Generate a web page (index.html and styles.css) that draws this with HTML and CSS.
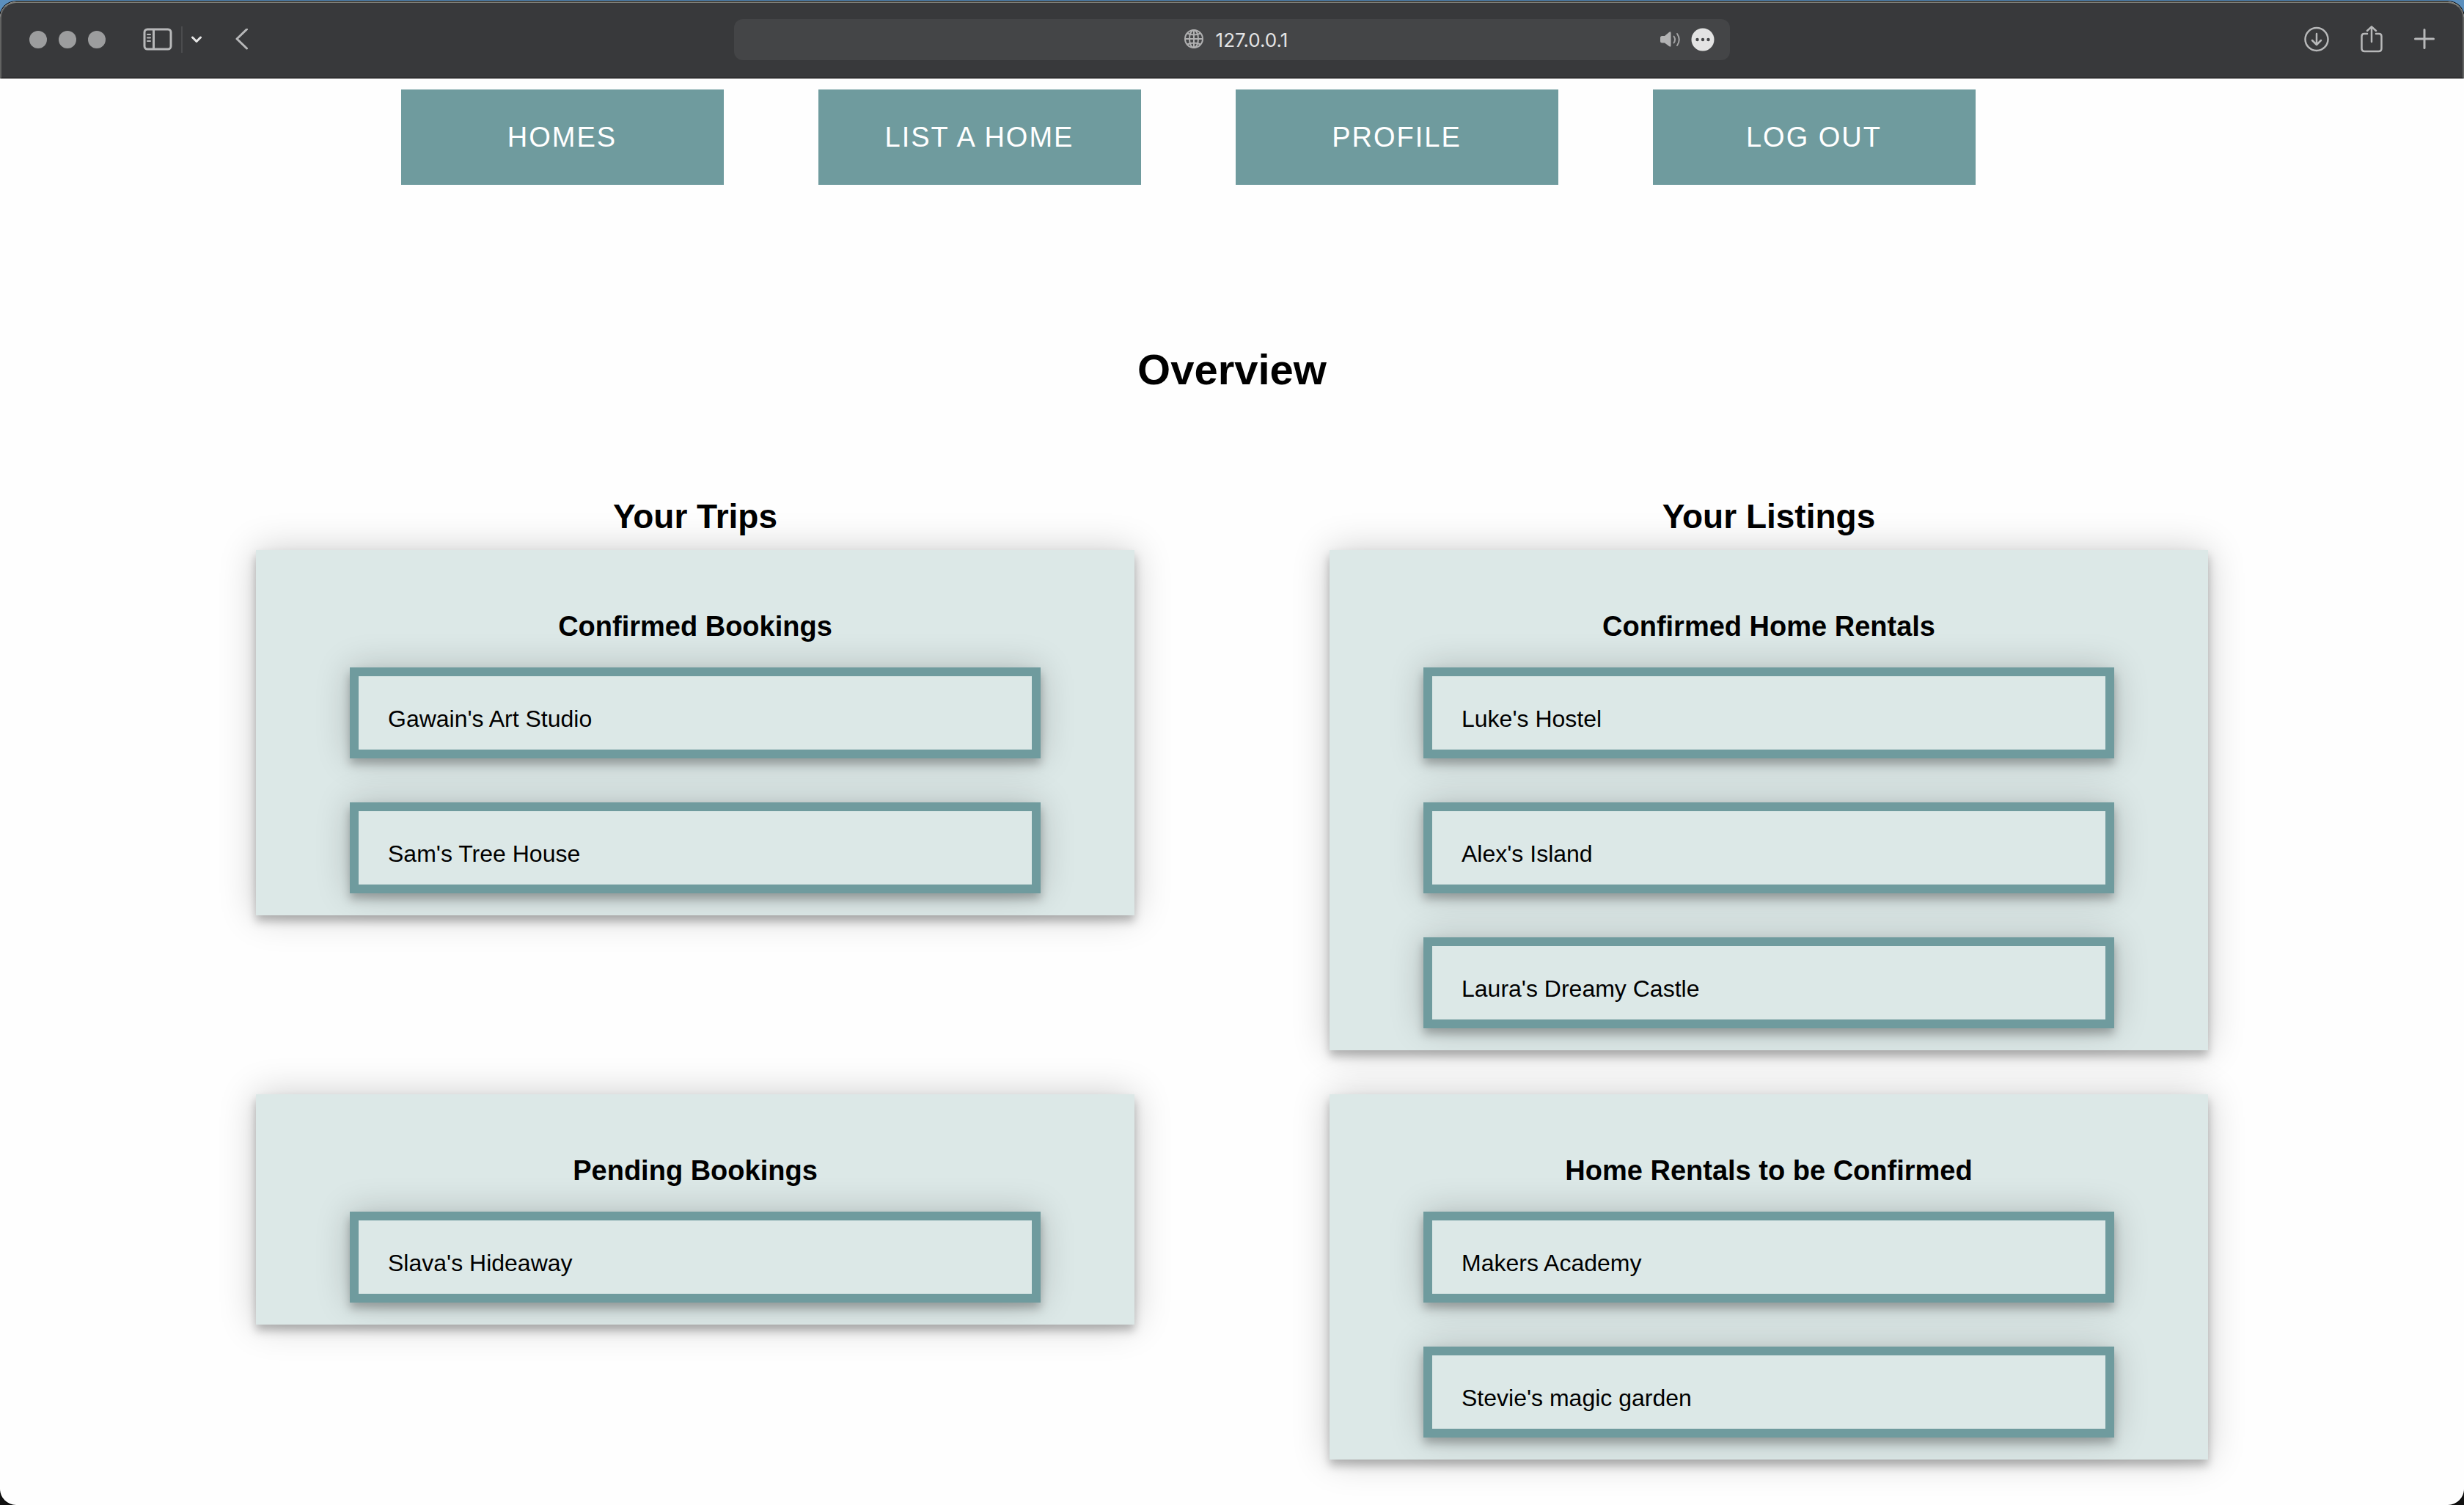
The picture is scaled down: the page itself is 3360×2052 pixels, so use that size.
FILE: index.html
```html
<!DOCTYPE html>
<html lang="en">
<head>
<meta charset="utf-8">
<title>Overview</title>
<link rel="stylesheet" href="styles.css">
</head>
<body>
<div class="window">
  <header class="toolbar">
    <div class="tools-left">
      <div class="lights"><span class="light"></span><span class="light"></span><span class="light"></span></div>
      <div class="sidebar-tools">
        <button class="tool" aria-label="Show sidebar"><svg width="40" height="32" viewBox="0 0 40 32" fill="none" stroke="#b7b8b9" stroke-width="3"><rect x="2" y="2" width="36" height="27" rx="4"/><path d="M14.500 2v27"/><path d="M6 9h4M6 13.500h4M6 18h4" stroke-width="2" stroke-linecap="round"/></svg></button>
        <span class="divider"></span>
        <button class="tool" aria-label="Tab groups"><svg width="14" height="10" viewBox="0 0 14 10" fill="none" stroke="#e6e6e6" stroke-width="3" stroke-linecap="round" stroke-linejoin="round"><path d="M1.500 2L7 7.500L12.500 2"/></svg></button>
      </div>
      <button class="tool back" aria-label="Back"><svg width="18" height="30" viewBox="0 0 18 30" fill="none" stroke="#b7b8b9" stroke-width="3" stroke-linecap="round" stroke-linejoin="round"><path d="M15.500 1L2 14L15.500 27"/></svg></button>
    </div>
    <div class="address">
      <div class="site">
        <svg width="28" height="28" viewBox="0 0 28 28" fill="none" stroke="#b0b0b1" stroke-width="2"><circle cx="14" cy="13" r="12"/><ellipse cx="14" cy="13" rx="6" ry="12"/><path d="M14 1v24M2 13h24M5 5.500q9 4 18 0M5 20.500q9-4 18 0"/></svg>
        <span>127.0.0.1</span>
      </div>
      <div class="address-tools">
        <button class="tool" aria-label="Mute tab"><svg width="28" height="24" viewBox="0 0 28 24"><path d="M0 9.500Q0 7 2.500 7H6L12 2Q14.500 0 14.500 3V20Q14.500 23 12 21L6 16.500H2.500Q0 16.500 0 14Z" fill="#b3b3b4"/><path d="M18.500 7.500Q21.500 12 18.500 16.500M23 4Q28.500 12 23 20" fill="none" stroke="#a3a3a4" stroke-width="2" stroke-linecap="round"/></svg></button>
        <button class="tool" aria-label="More"><svg width="32" height="32" viewBox="0 0 32 32"><circle cx="16" cy="16" r="15.500" fill="#e3e3e3"/><g fill="#444547"><circle cx="8.500" cy="16" r="2.200"/><circle cx="16" cy="16" r="2.200"/><circle cx="23.500" cy="16" r="2.200"/></g></svg></button>
      </div>
    </div>
    <div class="tools-right">
      <button class="tool" aria-label="Downloads"><svg width="34" height="38" viewBox="0 0 34 38" fill="none" stroke="#b7b8b9" stroke-width="2.500" stroke-linecap="round" stroke-linejoin="round"><circle cx="17" cy="18.500" r="15.500"/><path d="M17 11V25.500M11 20L17 26L23 20"/></svg></button>
      <button class="tool" aria-label="Share"><svg width="30" height="38" viewBox="0 0 30 38" fill="none" stroke="#b7b8b9" stroke-width="2.500" stroke-linecap="round" stroke-linejoin="round"><path d="M9 11H5Q1.500 11 1.500 14.500V31Q1.500 35 5.500 35H24.500Q28.500 35 28.500 31V14.500Q28.500 11 25 11H21"/><path d="M15 22V2M9 7L15 1.300L21 7"/></svg></button>
      <button class="tool" aria-label="New tab"><svg width="28" height="38" viewBox="0 0 28 38" fill="none" stroke="#b7b8b9" stroke-width="3" stroke-linecap="round"><path d="M14 5.500v25M1.500 18h25"/></svg></button>
    </div>
  </header>
  <main class="page">
    <nav class="menu">
      <a href="#homes">HOMES</a>
      <a href="#list">LIST A HOME</a>
      <a href="#profile">PROFILE</a>
      <a href="#logout">LOG OUT</a>
    </nav>
    <h1>Overview</h1>
    <div class="overview">
      <h2>Your Trips</h2>
      <h2>Your Listings</h2>
      <section class="card">
        <h3>Confirmed Bookings</h3>
        <ul>
          <li>Gawain's Art Studio</li>
          <li>Sam's Tree House</li>
        </ul>
      </section>
      <section class="card">
        <h3>Confirmed Home Rentals</h3>
        <ul>
          <li>Luke's Hostel</li>
          <li>Alex's Island</li>
          <li>Laura's Dreamy Castle</li>
        </ul>
      </section>
      <section class="card">
        <h3>Pending Bookings</h3>
        <ul>
          <li>Slava's Hideaway</li>
        </ul>
      </section>
      <section class="card">
        <h3>Home Rentals to be Confirmed</h3>
        <ul>
          <li>Makers Academy</li>
          <li>Stevie's magic garden</li>
        </ul>
      </section>
    </div>
  </main>
</div>
</body>
</html>
```
FILE: styles.css
```css
* { box-sizing: border-box; }

body {
  margin: 0;
  padding-top: 2px;
  background: linear-gradient(#5b8fbd 0 50%, #111 50%);
  font-family: "Liberation Sans", Arial, Helvetica, sans-serif;
  color: #000;
}

.window {
  min-height: calc(100vh - 2px);
  background: #fefefe;
  border-radius: 22px;
  overflow: hidden;
  box-shadow: 0 0 0 1px #000;
}

.toolbar {
  display: grid;
  grid-template-columns: 1fr minmax(0, 1358px) 1fr;
  align-items: center;
  height: 105px;
  padding: 0 38px 2px;
  background: #38393b;
  border: 2px solid #626362;
  border-top-color: #7d7e78;
  border-bottom: 1px solid #000;
  border-radius: 22px 22px 0 0;
}

.tool {
  display: flex;
  padding: 0;
  border: 0;
  background: none;
}

.tools-left,
.lights,
.sidebar-tools,
.address,
.site,
.address-tools,
.tools-right {
  display: flex;
  align-items: center;
}

.lights { gap: 16px; }

.light {
  width: 24px;
  height: 24px;
  border-radius: 50%;
  background: #9c9d9e;
}

.sidebar-tools {
  gap: 12px;
  margin-left: 51px;
}

.divider {
  width: 2px;
  height: 36px;
  background: #4b4c4e;
}

.back { margin-left: 46px; }

.address {
  position: relative;
  justify-content: center;
  height: 56px;
  border-radius: 12px;
  background: #444547;
}

.site {
  gap: 16px;
  padding-left: 10px;
  font: 26px Inter, sans-serif;
  color: #e3e3e4;
}

.address-tools {
  position: absolute;
  right: 21px;
  gap: 14px;
}

.tools-right {
  justify-content: flex-end;
  gap: 43px;
}

.page {
  padding: 15px 0 60px;
}

.menu {
  display: flex;
  justify-content: center;
  gap: 129px;
  padding-right: 120px;
}

.menu a {
  width: 440px;
  background: #6f9b9e;
  color: #fff;
  font-size: 38px;
  line-height: 130px;
  letter-spacing: 2px;
  text-align: center;
  text-decoration: none;
}

h1, h2, h3, ul {
  margin: 0;
  padding: 0;
}

h1 {
  margin-top: 216px;
  font-size: 58px;
  line-height: 72px;
  text-align: center;
}

h2, h3 { text-align: center; }

h2 {
  position: relative;
  z-index: 1;
  margin-bottom: -44px;
  font-size: 46px;
  line-height: 60px;
}

.overview {
  display: grid;
  grid-template-columns: 1fr 1fr;
  align-items: start;
  gap: 60px 266px;
  max-width: 2662px;
  margin: 134px auto 0;
}

.card {
  padding: 80px 128px 30px;
  background: #dce8e7;
  box-shadow: 0 8px 12px rgba(0, 0, 0, 0.26), 0 0 48px rgba(0, 0, 0, 0.2);
}

h3 {
  margin-bottom: 32px;
  font-size: 38px;
  line-height: 48px;
}

ul {
  display: grid;
  gap: 60px;
  list-style: none;
}

li {
  padding: 38px 40px 22px;
  border: 12px solid #6f9b9e;
  background: #dce8e7;
  box-shadow: 0 8px 12px rgba(0, 0, 0, 0.26), 0 0 48px rgba(0, 0, 0, 0.2);
  font-size: 32px;
  line-height: 40px;
}
```
